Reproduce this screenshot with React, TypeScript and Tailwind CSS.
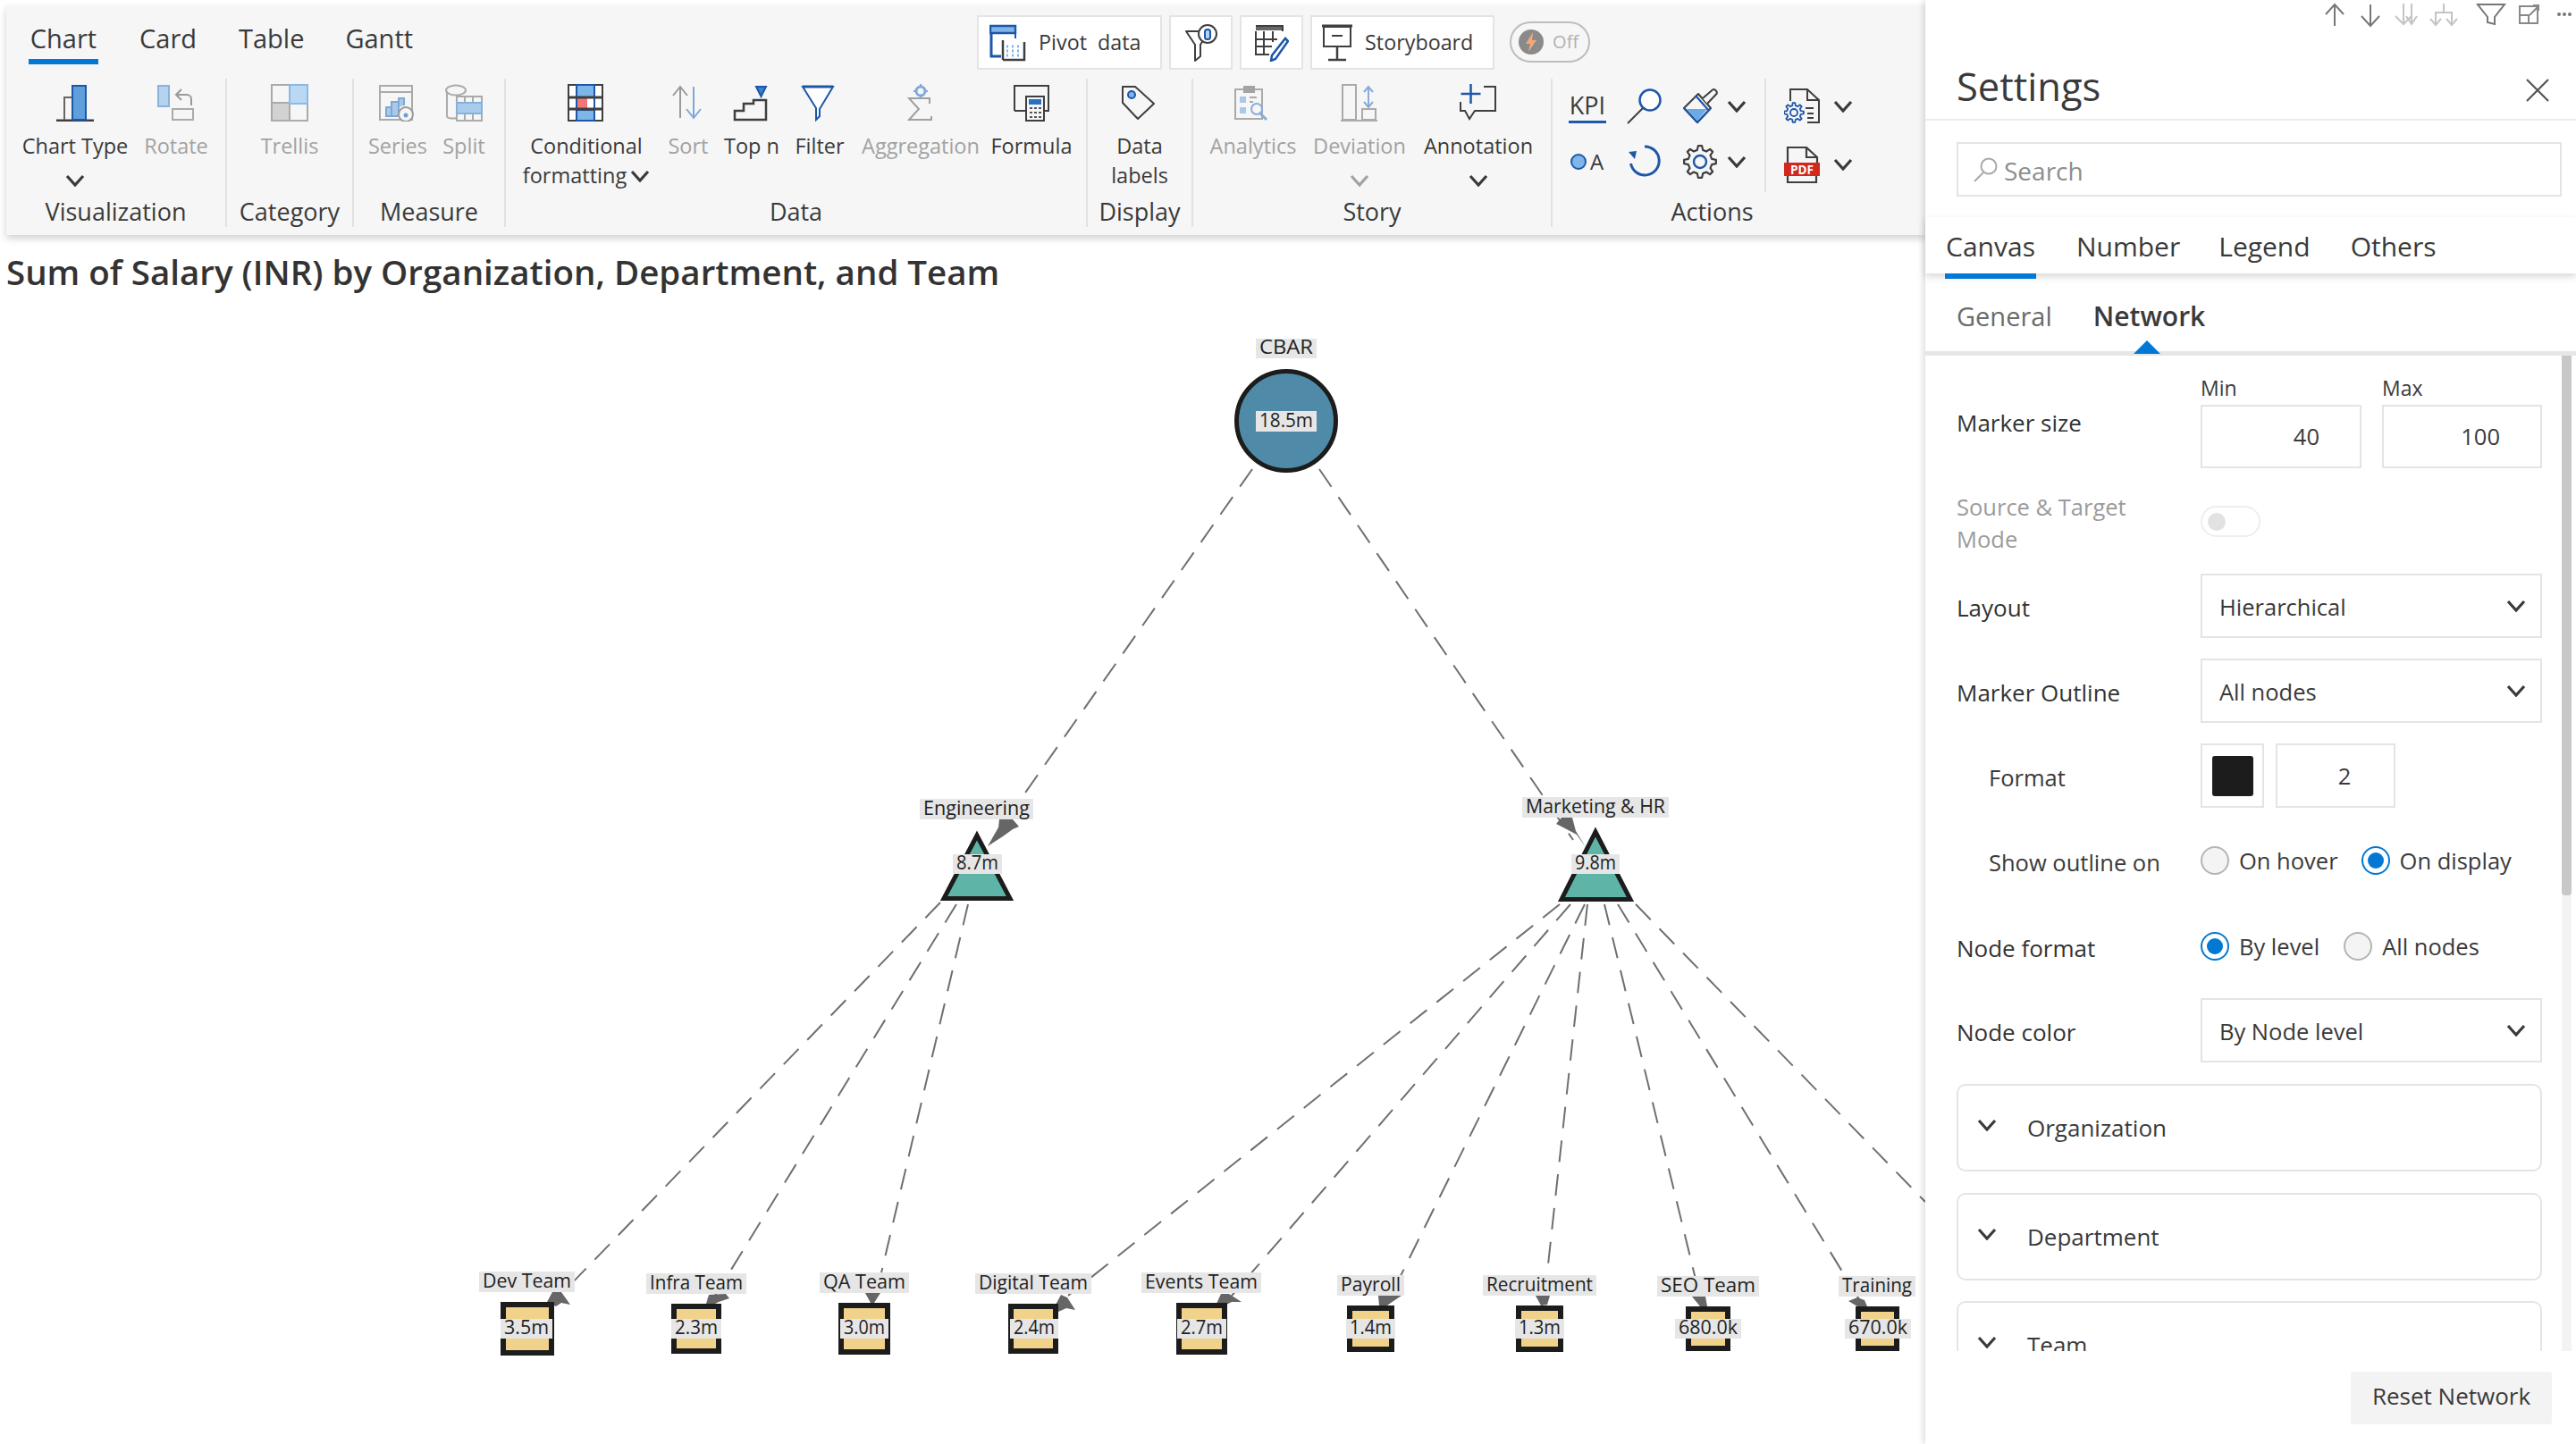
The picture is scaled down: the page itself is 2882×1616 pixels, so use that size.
import React from "react";

const B = "#1d57a8", L = "#7fb5e8", D = "#3f3f3f", LG = "#b4d3ef";

function Svg({ w = 42, h = 42, children }: { w?: number; h?: number; children: React.ReactNode }) {
  return (
    <svg width={w} height={h} viewBox={`0 0 ${w} ${h}`} fill="none" strokeWidth={2} className="shrink-0">
      {children}
    </svg>
  );
}

function Chev({ color = "#3a3a3a", w = 22 }: { color?: string; w?: number }) {
  return (
    <svg width={w} height={14} viewBox="0 0 22 14" fill="none" className="shrink-0">
      <path d="M2 2l9 10 9-10" stroke={color} strokeWidth={3.2} />
    </svg>
  );
}

function gearPath(cx: number, cy: number, r1: number, r2: number, n: number) {
  const pts: string[] = [];
  const step = (Math.PI * 2) / n;
  for (let i = 0; i < n; i++) {
    const a = i * step - Math.PI / 2;
    const t = step * 0.2;
    const s = step * 0.3;
    const p = [
      [r1, a - s],
      [r2, a - t * 0.75],
      [r2, a + t * 0.75],
      [r1, a + s],
    ];
    p.forEach(([r, an]) => pts.push(`${(cx + r * Math.cos(an)).toFixed(2)} ${(cy + r * Math.sin(an)).toFixed(2)}`));
  }
  return "M" + pts.join("L") + "Z";
}

const IChart = () => (
  <Svg>
    <path d="M0 41h42" stroke={D} strokeWidth={3} />
    <path d="M9 40V15h9" stroke="#666" />
    <rect x={18} y={2} width={15} height={38} fill="#5e9fdc" stroke={B} />
  </Svg>
);
const IRotate = () => (
  <Svg>
    <rect x={1} y={2} width={12} height={23} fill={LG} stroke="#8db1de" />
    <path d="M38 24v-7a5 5 0 0 0-5-5H22M27 6l-6 6 6 6" stroke="#999" />
    <rect x={17} y={28} width={23} height={12} stroke="#aaa" />
  </Svg>
);
const ITrellis = () => (
  <Svg>
    <rect x={1} y={1} width={40} height={40} stroke="#aaa" />
    <rect x={1} y={21} width={20} height={20} fill="#d2d2d2" stroke="#aaa" />
    <rect x={21} y={1} width={20} height={21} fill="#b9d8f3" stroke="#8db8e4" />
  </Svg>
);
const ISeries = () => (
  <Svg>
    <rect x={1} y={2} width={36} height={38} stroke="#aaa" />
    <path d="M1 9h36" stroke="#aaa" />
    <path d="M8 36V26h6v10zM14 36V20h8v16zM22 26v-10h6v8" fill="#a8c9ea" stroke="#7fa8d4" />
    <circle cx={30} cy={34} r={8} fill="#f6f6f6" stroke="#9a9a9a" />
    <circle cx={30} cy={35} r={2.5} fill="#6f9fd0" />
  </Svg>
);
const ISplit = () => (
  <Svg>
    <path d="M2 8v28c0 3 8 3 12 2" stroke="#aaa" />
    <ellipse cx={12} cy={7} rx={11} ry={5.5} stroke="#aaa" />
    <rect x={13} y={14} width={28} height={27} fill="#f6f6f6" stroke="#aaa" />
    <path d="M22 14v27M31 14v27" stroke="#aaa" />
    <rect x={13} y={21} width={28} height={12} fill="#a9cced" stroke="#87b0da" />
  </Svg>
);
const ICond = () => (
  <Svg>
    <rect x={1} y={1} width={38} height={40} stroke={D} strokeWidth={2} fill="#fff" />
    <rect x={10} y={1} width={20} height={14} fill={L} stroke={B} />
    <rect x={10} y={29} width={20} height={12} fill={L} stroke={B} />
    <rect x={10} y={15} width={12} height={14} fill="#f3767a" />
    <path d="M10 1v40M30 1v40" stroke={B} />
    <path d="M1 15h38M1 28h38" stroke={D} strokeWidth={3} />
  </Svg>
);
const ISort = () => (
  <Svg>
    <path d="M12 38V3M4 13l8-10 8 10" stroke="#9a9a9a" />
    <path d="M27 3v35M19 28l8 10 8-10" stroke="#7fa8d8" />
  </Svg>
);
const ITopN = () => (
  <Svg>
    <path d="M26 3h11l-5.5 11z" fill="#3f7fcf" stroke={B} />
    <path d="M2 40V30h10V22h11V18h14V40z" stroke={D} strokeWidth={2.5} />
  </Svg>
);
const IFilter = () => (
  <Svg>
    <path d="M2 3h34L21 28v8l-4 4V27z" stroke={B} strokeWidth={2} fill="#fff" />
    <path d="M2 3h34" stroke={B} strokeWidth={3} />
  </Svg>
);
const IAgg = () => (
  <Svg w={30}>
    <circle cx={15} cy={8} r={5} stroke="#80a8d8" strokeWidth={3} />
    <path d="M15 0v3M15 13v3M7 8h3M20 8h3" stroke="#80a8d8" />
    <path d="M25 22v-6H2l11 12L2 40h25v-4" stroke="#a0a0a0" />
  </Svg>
);
const IFormula = () => (
  <Svg>
    <path d="M2 30V2h38v28h-4M2 30h12" stroke={D} strokeWidth={2} />
    <rect x={15} y={14} width={20} height={27} fill="#f6f6f6" stroke={D} strokeWidth={2} />
    <rect x={18} y={17} width={14} height={6} fill="#2a70c0" />
    <path d="M19 27h3M24 27h3M29 27h3M19 32h3M24 32h3M29 32h3M19 37h3M24 37h3M29 37h3" stroke="#555" />
  </Svg>
);
const ITag = () => (
  <Svg>
    <path d="M2 3h14l21 19-18 17L2 21z" stroke={D} strokeWidth={2} strokeLinejoin="round" />
    <circle cx={12} cy={12} r={4} fill={L} stroke={B} />
  </Svg>
);
const IAnalytics = () => (
  <Svg>
    <rect x={1} y={6} width={30} height={33} fill="#f6f6f6" stroke="#aaa" />
    <rect x={10} y={2} width={13} height={8} fill="#a3a3a3" />
    <rect x={6} y={14} width={7} height={7} fill="#a9c9ea" />
    <rect x={6} y={26} width={7} height={7} fill="#a9c9ea" />
    <path d="M17 15h8M17 20h4" stroke="#aaa" />
    <circle cx={25} cy={28} r={6} fill="#f6f6f6" stroke="#87add8" />
    <path d="M29 33l7 7" stroke="#87add8" strokeWidth={3} />
  </Svg>
);
const IDeviation = () => (
  <Svg>
    <rect x={2} y={1} width={15} height={39} stroke="#aaa" />
    <path d="M0 41h41" stroke="#aaa" />
    <rect x={24} y={28} width={15} height={12} stroke="#aaa" />
    <path d="M31 3v23M26 9l5-6 5 6M26 20l5 6 5-6" stroke="#87add8" />
  </Svg>
);
const IAnnot = () => (
  <Svg>
    <path d="M27 3H40V30H17L11 39 6 30H1V20" stroke={D} />
    <path d="M12.5 0V22M1.5 11H23.5" stroke={B} strokeWidth={2.5} />
  </Svg>
);
const ISearch = () => (
  <Svg w={40} h={40}>
    <circle cx={26} cy={13} r={11.5} stroke={B} strokeWidth={2.5} fill="#fff" />
    <path d="M18 22L1 39" stroke={D} strokeWidth={2} />
  </Svg>
);
const IBrush = () => (
  <Svg w={40} h={40}>
    <path d="M1 22L17 6 31 22 16 38z" fill="#f6f6f6" stroke={D} strokeLinejoin="round" />
    <path d="M4 23H27L16 36z" fill="#6aaae6" />
    <path d="M1 22L16 38 31 22" stroke={B} strokeWidth={2.2} strokeLinejoin="round" />
    <path d="M22 11L33 1.5c2-1.5 6 2 4.5 4.5L27 17" fill="#f6f6f6" stroke={D} strokeLinejoin="round" />
    <path d="M14 8l15 17" stroke={B} strokeWidth={2.2} />
  </Svg>
);
const IDocGear = () => (
  <Svg w={40} h={40}>
    <path d="M7 14V1H26L39 13V38H26" stroke={D} />
    <path d="M26 1V13H39" stroke={D} />
    <path d="M24 22h9M26 28h7M26 33h7" stroke={D} />
    <path d={gearPath(11, 27, 8, 11, 8)} stroke={B} fill="#f6f6f6" strokeWidth={1.8} strokeLinejoin="round" />
    <circle cx={11} cy={27} r={4} stroke={B} strokeWidth={1.8} />
  </Svg>
);
const IRefresh = () => (
  <Svg w={38} h={38}>
    <path d="M19 2A16 16 0 1 1 3.5 21" stroke={B} strokeWidth={3} />
    <path d="M1 8l9-1-2 9z" fill={B} />
  </Svg>
);
const IGear = () => (
  <Svg w={38} h={38}>
    <path d={gearPath(19, 19, 13.5, 18, 8)} stroke={D} strokeWidth={2.2} strokeLinejoin="round" />
    <circle cx={19} cy={19} r={7} stroke={B} strokeWidth={2.4} />
  </Svg>
);
const IPdf = () => (
  <Svg w={40} h={41}>
    <path d="M4 18V1H25L37 12V18M25 1V12H37M4 33V40H36V33" stroke={D} strokeWidth={2.2} />
    <rect x={0} y={18} width={40} height={15} fill="#d2281c" />
    <text x={20} y={30.5} fontSize={13.5} fontWeight={700} fill="#fff" textAnchor="middle" fontFamily="Open Sans">PDF</text>
  </Svg>
);
const IPivot = () => (
  <Svg h={42}>
    <path d="M1 2h28v8H1z" fill={L} stroke={B} strokeWidth={2.4} />
    <path d="M2 10v26h11" stroke={B} strokeWidth={3} />
    <path d="M29 10v6" stroke={B} />
    <path d="M15 40V18M15 40h24V20" stroke={D} strokeWidth={2.5} />
    <path d="M19 25h2M25 25h2M31 25h2M19 30h2M25 30h2M31 30h2M19 35h2M25 35h2M31 35h2" stroke={L} strokeWidth={3} />
  </Svg>
);
const IFilterInfo = () => (
  <Svg w={36} h={42}>
    <path d="M17 8H1L11 23V41L17 36V23L20 18" stroke={D} strokeLinejoin="round" />
    <circle cx={25} cy={11} r={10} fill="#fff" stroke={D} />
    <rect x={22} y={6} width={6} height={11} rx={2.5} fill={LG} stroke={B} />
  </Svg>
);
const ITablePen = () => (
  <Svg w={38} h={42}>
    <rect x={1} y={2} width={30} height={5} fill="#666" />
    <path d="M1 2h30v6M1 8v26h15M1 17h24M1 25h18M10 8v26M20 8v12" stroke={D} />
    <path d="M34 16l3 3-14 20-5 2 1-6z" fill="#fff" stroke={B} strokeWidth={2.5} />
  </Svg>
);
const IStory = () => (
  <Svg w={34} h={42}>
    <rect x={2} y={3} width={30} height={22} stroke={D} />
    <path d="M0 2h34" stroke={D} strokeWidth={3} />
    <path d="M11 13h12" stroke={D} strokeWidth={2} />
    <path d="M17 25v14M7 40h20" stroke={D} strokeWidth={2.5} />
  </Svg>
);

function Item({ w, label, label2, chev, off, icon, inlineChev }: { w: number; label: string; label2?: string; chev?: boolean; off?: boolean; icon: React.ReactNode; inlineChev?: boolean }) {
  return (
    <div className="flex flex-col items-center" style={{ width: w }}>
      <div className="h-[42px] flex items-center justify-center mt-[6px]">{icon}</div>
      <div className={`mt-[11px] text-[23.5px] leading-[33px] whitespace-nowrap text-center ${off ? "text-[#a2a2a2]" : "text-[#3a3a3a]"}`}>
        {label}
        {label2 && (
          <div className="flex items-center justify-center gap-[4px]">
            {label2}
            {inlineChev && <Chev />}
          </div>
        )}
      </div>
      {chev && (
        <div className="mt-[15px] flex justify-center">
          <Chev color={off ? "#a2a2a2" : "#3a3a3a"} />
        </div>
      )}
    </div>
  );
}

function Group({ w, title, first, pl = 0, pr = 0, children }: { w: number; title: string; first?: boolean; pl?: number; pr?: number; children: React.ReactNode }) {
  return (
    <div className={`h-[166px] relative flex flex-col shrink-0 ${first ? "" : "border-l-2 border-[#e2e2e2]"}`} style={{ width: w }}>
      <div className="flex-1 flex" style={{ paddingLeft: pl }}>{children}</div>
      <div className="h-[34px] text-[27px] leading-[34px] text-center font-medium text-[#3a3a3a]" style={{ paddingRight: pr }}>{title}</div>
    </div>
  );
}

function TopBtn({ className, children }: { className: string; children: React.ReactNode }) {
  return <div className={`h-[61px] bg-white border-2 border-[#e4e4e4] flex items-center ${className}`}>{children}</div>;
}

function Toolbar() {
  return (
    <div className="ml-[7px] mt-[6px] w-[2147px] h-[257px] bg-[#f6f6f6] shadow-[0_4px_8px_rgba(0,0,0,0.18)] shrink-0">
      <div className="h-[82px] flex items-start">
        <div className="flex pl-[25px] pt-[19px] text-[29px] leading-[36px] text-[#3a3a3a]">
          <div className="w-[78px] h-[47px] border-b-[6px] border-[#0078d4] font-medium text-center whitespace-nowrap">Chart</div>
          <div className="ml-[46px]">Card</div>
          <div className="ml-[47px]">Table</div>
          <div className="ml-[46px]">Gantt</div>
        </div>
        <div className="ml-[631px] mt-[11px] flex items-start gap-[8px] text-[23.3px] text-[#3a3a3a]">
          <TopBtn className="w-[207px] pl-[12px] gap-[13px]">
            <IPivot />
            <span className="whitespace-nowrap [word-spacing:6px]">Pivot data</span>
          </TopBtn>
          <TopBtn className="w-[71px] justify-center">
            <IFilterInfo />
          </TopBtn>
          <TopBtn className="w-[71px] justify-center">
            <ITablePen />
          </TopBtn>
          <TopBtn className="w-[206px] pl-[11px] gap-[14px]">
            <IStory />
            <span>Storyboard</span>
          </TopBtn>
          <div className="ml-[9px] mt-[7px] w-[90px] h-[46px] rounded-full border-2 border-[#bdbdbd] flex items-center pl-[8px] gap-[10px]">
            <svg width={28} height={28} viewBox="0 0 28 28">
              <circle cx={14} cy={14} r={14} fill="#8a8a8a" />
              <path d="M16 3L8 16h5l-2 9 9-13h-5z" fill="#f4a878" />
            </svg>
            <span className="text-[20px] text-[#b0b0b0]">Off</span>
          </div>
        </div>
      </div>
      <div className="flex">
        <Group w={245} title="Visualization" first pl={13}>
          <Item w={128} label="Chart Type" chev icon={<IChart />} />
          <Item w={98} label="Rotate" off icon={<IRotate />} />
        </Group>
        <Group w={142} title="Category">
          <Item w={140} label="Trellis" off icon={<ITrellis />} />
        </Group>
        <Group w={170} title="Measure" pl={6}>
          <Item w={86} label="Series" off icon={<ISeries />} />
          <Item w={62} label="Split" off icon={<ISplit />} />
        </Group>
        <Group w={651} title="Data" pl={16}>
          <Item w={148} label="Conditional" label2="formatting" inlineChev icon={<ICond />} />
          <Item w={80} label="Sort" off icon={<ISort />} />
          <Item w={62} label="Top n" icon={<ITopN />} />
          <Item w={90} label="Filter" icon={<IFilter />} />
          <Item w={136} label="Aggregation" off icon={<IAgg />} />
          <Item w={112} label="Formula" icon={<IFormula />} />
        </Group>
        <Group w={118} title="Display">
          <Item w={116} label="Data" label2="labels" icon={<ITag />} />
        </Group>
        <Group w={402} title="Story" pl={7}>
          <Item w={120} label="Analytics" off icon={<IAnalytics />} />
          <Item w={118} label="Deviation" off chev icon={<IDeviation />} />
          <Item w={148} label="Annotation" chev icon={<IAnnot />} />
        </Group>
        <Group w={419} title="Actions" pr={60}>
          <div className="flex pl-[18px] h-[128px]">
            <div className="w-[219px] flex flex-col">
              <div className="h-[62px] flex items-center">
                <div className="w-[42px] text-[27px] leading-[34px] border-b-[3px] border-[#1d57a8] text-center text-[#3a3a3a] shrink-0">KPI</div>
                <div className="ml-[23px]"><ISearch /></div>
                <div className="ml-[23px]"><IBrush /></div>
                <div className="ml-[9px]"><Chev /></div>
              </div>
              <div className="h-[62px] flex items-center">
                <div className="w-[42px] pl-[2px] flex items-center gap-[4px] text-[24px] text-[#3a3a3a] shrink-0">
                  <span className="w-[18px] h-[18px] rounded-full bg-[#7fb5e8] border-2 border-[#1d57a8] shrink-0" />
                  <span>A</span>
                </div>
                <div className="ml-[24px]"><IRefresh /></div>
                <div className="ml-[24px]"><IGear /></div>
                <div className="ml-[11px]"><Chev /></div>
              </div>
            </div>
            <div className="w-[110px] border-l-2 border-[#e2e2e2] h-[127px] pl-[20px] flex flex-col">
              <div className="h-[60px] flex items-center gap-[15px] pt-[2px]"><IDocGear /><Chev /></div>
              <div className="h-[68px] flex items-center gap-[15px] pt-[6px]"><IPdf /><Chev /></div>
            </div>
          </div>
        </Group>
      </div>
    </div>
  );
}

const edges = [
  [1401, 525, 1117, 930],
  [1476, 525, 1760, 940],
  [1052, 1010, 636, 1440],
  [1070, 1012, 800, 1450],
  [1083, 1012, 980, 1450],
  [1745, 1012, 1195, 1450],
  [1757, 1012, 1378, 1450],
  [1773, 1012, 1555, 1452],
  [1776, 1012, 1728, 1452],
  [1795, 1012, 1902, 1452],
  [1810, 1012, 2080, 1454],
  [1830, 1012, 2154, 1345],
];
const arrows = [
  "612,1457 618,1446 628,1446 638,1460 628,1458 622,1462",
  "790,1459 793,1449 812,1448 816,1453 804,1457 798,1460",
  "968,1447 985,1447 978,1458 974,1458",
  "1180,1462 1187,1449 1194,1452 1203,1466 1193,1464 1184,1468",
  "1361,1459 1366,1448 1375,1448 1389,1457 1378,1457 1372,1460",
  "1542,1450 1568,1450 1556,1458 1552,1461 1543,1461",
  "1718,1450 1734,1450 1731,1460 1724,1461",
  "1893,1451 1908,1451 1910,1462 1902,1462",
  "2068,1456 2078,1452 2086,1455 2089,1462 2078,1462",
  "1105,947 1117,926 1118,917 1133,917 1140,925 1133,928 1122,936",
  "1774,948 1764,934 1745,924 1741,922 1747,915 1759,915 1763,930",
];
const leaves = [
  { n: "Dev Team", v: "3.5m", x1: 560, x2: 620, y1: 1457, y2: 1517, l1: 536, l2: 643, ly: 1423, v1: 560, v2: 618 },
  { n: "Infra Team", v: "2.3m", x1: 751, x2: 807, y1: 1459, y2: 1515, l1: 723, l2: 835, ly: 1425, v1: 751, v2: 807 },
  { n: "QA Team", v: "3.0m", x1: 938, x2: 996, y1: 1458, y2: 1516, l1: 917, l2: 1017, ly: 1424, v1: 940, v2: 994 },
  { n: "Digital Team", v: "2.4m", x1: 1128, x2: 1184, y1: 1459, y2: 1515, l1: 1091, l2: 1221, ly: 1425, v1: 1130, v2: 1184 },
  { n: "Events Team", v: "2.7m", x1: 1316, x2: 1373, y1: 1458, y2: 1516, l1: 1277, l2: 1411, ly: 1424, v1: 1317, v2: 1372 },
  { n: "Payroll", v: "1.4m", x1: 1507, x2: 1560, y1: 1461, y2: 1513, l1: 1496, l2: 1571, ly: 1427, v1: 1506, v2: 1561 },
  { n: "Recruitment", v: "1.3m", x1: 1696, x2: 1749, y1: 1461, y2: 1513, l1: 1659, l2: 1786, ly: 1427, v1: 1695, v2: 1750 },
  { n: "SEO Team", v: "680.0k", x1: 1886, x2: 1936, y1: 1462, y2: 1512, l1: 1854, l2: 1968, ly: 1428, v1: 1874, v2: 1948 },
  { n: "Training", v: "670.0k", x1: 2076, x2: 2125, y1: 1462, y2: 1512, l1: 2057, l2: 2143, ly: 1428, v1: 2064, v2: 2138 },
];

function Lbl({ x1, x2, y, h = 23, t }: { x1: number; x2: number; y: number; h?: number; t: string }) {
  return (
    <g>
      <rect x={x1} y={y} width={x2 - x1} height={h} fill="#e6e6e6" />
      <text x={(x1 + x2) / 2} y={y + h / 2 + 6} textAnchor="middle" fontSize={21} fill="#222" fontFamily="'Open Sans', sans-serif" textLength={x2 - x1 - 8} lengthAdjust="spacingAndGlyphs">{t}</text>
    </g>
  );
}

function Chart() {
  return (
    <div className="flex-1 min-h-0 overflow-hidden">
      <svg width={2154} height={1276} viewBox="0 340 2154 1276" className="block">
        {edges.map((e, i) => (
          <line key={i} x1={e[0]} y1={e[1]} x2={e[2]} y2={e[3]} stroke="#6f6f6f" strokeWidth={2} strokeDasharray="24 14" />
        ))}
        {arrows.map((p, i) => (
          <polygon key={i} points={p} fill="#666" />
        ))}
        <circle cx={1439} cy={471} r={55.5} fill="#4f8ba8" stroke="#1c1c1c" strokeWidth={5} />
        <Lbl x1={1405} x2={1473} y={379} h={22} t="CBAR" />
        <Lbl x1={1405} x2={1473} y={460} h={23} t="18.5m" />
        <polygon points="1093,935 1130,1005.5 1056,1005.5" fill="#5eb5a7" stroke="#1c1c1c" strokeWidth={5} />
        <Lbl x1={1029} x2={1156} y={894} t="Engineering" />
        <Lbl x1={1066} x2={1121} y={956} h={22} t="8.7m" />
        <polygon points="1785,931 1824,1006.5 1747,1006.5" fill="#5eb5a7" stroke="#1c1c1c" strokeWidth={5} />
        <Lbl x1={1703} x2={1867} y={892} t="Marketing & HR" />
        <Lbl x1={1758} x2={1812} y={956} h={22} t="9.8m" />
        {leaves.map((n) => (
          <g key={n.n}>
            <rect x={n.x1 + 3} y={n.y1 + 3} width={n.x2 - n.x1 - 6} height={n.y2 - n.y1 - 6} fill="#f0d28a" stroke="#1c1c1c" strokeWidth={6} />
            <Lbl x1={n.l1} x2={n.l2} y={n.ly} t={n.n} />
            <Lbl x1={n.v1} x2={n.v2} y={1476} h={22} t={n.v} />
          </g>
        ))}
      </svg>
    </div>
  );
}

function Field({ label, sub, children, dim, mt, labelCls = "" }: { label: React.ReactNode; sub?: boolean; children: React.ReactNode; dim?: boolean; mt: string; labelCls?: string }) {
  return (
    <div className={`flex items-center min-h-[72px] shrink-0 ${mt}`}>
      <div className={`w-[273px] shrink-0 pt-[3px] leading-[36px] ${sub ? "pl-[36px] text-[25.5px] text-[#3a3a3a]" : dim ? "text-[25.5px] text-[#9b9b9b] font-medium" : "text-[26px] text-[#333]"} ${labelCls}`}>{label}</div>
      {children}
    </div>
  );
}

function Select({ v }: { v: string }) {
  return (
    <div className="w-[382px] h-[72px] border-2 border-[#e4e4e4] flex items-center justify-between pl-[19px] pr-[16px] text-[25.5px] text-[#3a3a3a]">
      <span className="pt-[3px]">{v}</span>
      <Chev />
    </div>
  );
}

function Radio({ on, label, gap }: { on?: boolean; label: string; gap: number }) {
  return (
    <div className="flex items-center" style={{ marginRight: gap }}>
      <span className={`w-[32px] h-[32px] rounded-full border-2 flex items-center justify-center shrink-0 ${on ? "border-[#0078d4] bg-white" : "border-[#b4b4b4] bg-[#f4f4f4]"}`}>
        {on && <span className="w-[18px] h-[18px] rounded-full bg-[#0078d4]" />}
      </span>
      <span className="ml-[11px] text-[25.5px] text-[#3a3a3a] whitespace-nowrap">{label}</span>
    </div>
  );
}

function Acc({ t, mt }: { t: string; mt: string }) {
  return (
    <div className={`w-[655px] h-[98px] shrink-0 rounded-[10px] border-2 border-[#e4e4e4] flex items-center pl-[21px] ${mt}`}>
      <span className="-mt-[6px]"><Chev /></span>
      <span className="ml-[34px] text-[26px] font-medium text-[#3a3a3a]">{t}</span>
    </div>
  );
}

function Panel() {
  return (
    <div className="w-[728px] h-full shrink-0 bg-white shadow-[-3px_0_6px_rgba(0,0,0,0.12)] z-10 flex flex-col relative">
      <div className="h-[40px] flex items-start justify-end pt-[3px] pr-[4px] shrink-0">
        <svg width={278} height={30} viewBox="0 0 278 30" fill="none" strokeWidth={2} stroke="#777">
          <path d="M12 26V2M2 13L12 2l10 11" />
          <path d="M52 2v24M42 15l10 11 10-11" />
          <g stroke="#c4c4c4"><path d="M89 1v23M80 15l9 9 9-9M98 1v23" /><path d="M92 15l6 9 6-9" /></g>
          <g stroke="#c4c4c4"><path d="M134 1v10M125 24V11h18v13M119 18l6 7 6-7M137 18l6 7 6-7" /></g>
          <path d="M172 2h30l-11 14v8l-8-2V16z" />
          <path d="M219 4h20v19h-20zM219 14h10v9M230 14l10-10M234 3h6v6" stroke="#888" />
          <g fill="#777" stroke="none"><circle cx={263} cy={13} r={2} /><circle cx={269} cy={13} r={2} /><circle cx={275} cy={13} r={2} /></g>
        </svg>
      </div>
      <div className="h-[95px] border-b-2 border-[#ececec] flex items-center justify-between pl-[35px] pr-[30px] shrink-0">
        <span className="text-[43.5px] leading-[56px] mt-[20px] text-[#3a3a3a]">Settings</span>
        <svg width={26} height={26} viewBox="0 0 26 26" stroke="#555" strokeWidth={2.2} fill="none" className="mt-[28px]"><path d="M1 1l24 24M25 1L1 25" /></svg>
      </div>
      <div className="h-[108px] pl-[35px] pt-[24px] shrink-0">
        <div className="w-[677px] h-[61px] border-2 border-[#e4e4e4] flex items-center pl-[16px] gap-[7px]">
          <svg width={28} height={28} viewBox="0 0 28 28" fill="none" stroke="#a8a8a8" strokeWidth={2}><circle cx={18} cy={10} r={8.5} /><path d="M12 17L2 27" /></svg>
          <span className="text-[28px] pt-[3px] text-[#8d8d8d]">Search</span>
        </div>
      </div>
      <div className="h-[63px] shrink-0 flex pl-[22px] relative shadow-[0_4px_8px_rgba(0,0,0,0.15)] text-[30px] leading-[66px] text-[#3a3a3a] z-10">
        <div className="w-[102px] relative text-center font-medium">
          Canvas
          <span className="absolute left-0 right-0 -bottom-[6px] h-[6px] bg-[#0078d4]" />
        </div>
        <div className="ml-[45px]">Number</div>
        <div className="ml-[43px]">Legend</div>
        <div className="ml-[45px]">Others</div>
      </div>
      <div className="h-[92px] shrink-0 border-b-[5px] border-[#e6e6e6] flex pl-[35px] pt-[27px] text-[29px] leading-[42px] relative">
        <span className="text-[#6b6b6b]">General</span>
        <span className="ml-[46px] font-semibold text-[30px] text-[#3a3a3a]">Network</span>
        <span className="absolute left-[233px] bottom-[-3px] w-0 h-0 border-l-[15px] border-r-[15px] border-b-[15px] border-l-transparent border-r-transparent border-b-[#0078d4]" />
      </div>
      <div className="h-[1114px] shrink-0 relative overflow-hidden pl-[35px] flex flex-col">
        <div className="absolute right-[5px] top-0 bottom-0 w-[11px] bg-[#f3f3f3]">
          <div className="h-[604px] bg-[#c8c8c8] rounded-b-[4px]" />
        </div>
        <div className="flex items-center mt-[22px] shrink-0">
          <div className="w-[273px] pt-[3px] text-[26px] font-medium text-[#333]">Marker size</div>
          <div className="flex gap-[23px] text-[23px] text-[#3a3a3a]">
            <div className="w-[180px]">
              <div className="h-[33px] leading-[28px]">Min</div>
              <div className="h-[71px] border-2 border-[#e4e4e4] flex items-center justify-end pr-[45px] text-[25.5px]">40</div>
            </div>
            <div className="w-[179px]">
              <div className="h-[33px] leading-[28px]">Max</div>
              <div className="h-[71px] border-2 border-[#e4e4e4] flex items-center justify-end pr-[45px] text-[25.5px]">100</div>
            </div>
          </div>
        </div>
        <Field label={<>Source &amp; Target<br />Mode</>} dim mt="mt-[22px]">
          <div className="w-[67px] h-[35px] rounded-full border-2 border-[#eeeeee] flex items-center pl-[6px]">
            <span className="w-[20px] h-[20px] rounded-full bg-[#e2e2e2]" />
          </div>
        </Field>
        <Field label="Layout" mt="mt-[21px]" labelCls="font-medium"><Select v="Hierarchical" /></Field>
        <Field label="Marker Outline" mt="mt-[23px]" labelCls="font-medium"><Select v="All nodes" /></Field>
        <Field label="Format" sub mt="mt-[23px]">
          <div className="flex gap-[13px]">
            <div className="w-[71px] h-[72px] border-2 border-[#e4e4e4] flex items-center justify-center">
              <span className="w-[46px] h-[45px] rounded-[3px] bg-[#1c1c1c]" />
            </div>
            <div className="w-[134px] h-[72px] border-2 border-[#e4e4e4] flex items-center justify-center text-[25.5px] text-[#3a3a3a] pl-[20px]">2</div>
          </div>
        </Field>
        <Field label="Show outline on" sub mt="mt-[23px]">
          <Radio label="On hover" gap={26} />
          <Radio on label="On display" gap={0} />
        </Field>
        <Field label="Node format" mt="mt-[24px]" labelCls="font-medium">
          <Radio on label="By level" gap={27} />
          <Radio label="All nodes" gap={0} />
        </Field>
        <Field label="Node color" mt="mt-[22px]" labelCls="font-medium"><Select v="By Node level" /></Field>
        <Acc t="Organization" mt="mt-[24px]" />
        <Acc t="Department" mt="mt-[24px]" />
        <Acc t="Team" mt="mt-[23px]" />
      </div>
      <div className="flex justify-end pt-[23px] pr-[27px]">
        <div className="w-[225px] h-[59px] bg-[#f3f3f3] rounded-[3px] flex items-center justify-center text-[26px] font-medium text-[#3a3a3a] pb-[4px]">Reset Network</div>
      </div>
    </div>
  );
}

export default function App() {
  return (
    <div className="w-[2882px] h-[1616px] overflow-hidden bg-white flex font-['Open_Sans',sans-serif]">
      <div className="w-[2154px] shrink-0 flex flex-col h-full">
        <Toolbar />
        <div className="h-[77px] shrink-0 pl-[7px] pt-[14px] text-[38.5px] leading-[54px] font-semibold text-[#333] whitespace-nowrap">Sum of Salary (INR) by Organization, Department, and Team</div>
        <Chart />
      </div>
      <Panel />
    </div>
  );
}
